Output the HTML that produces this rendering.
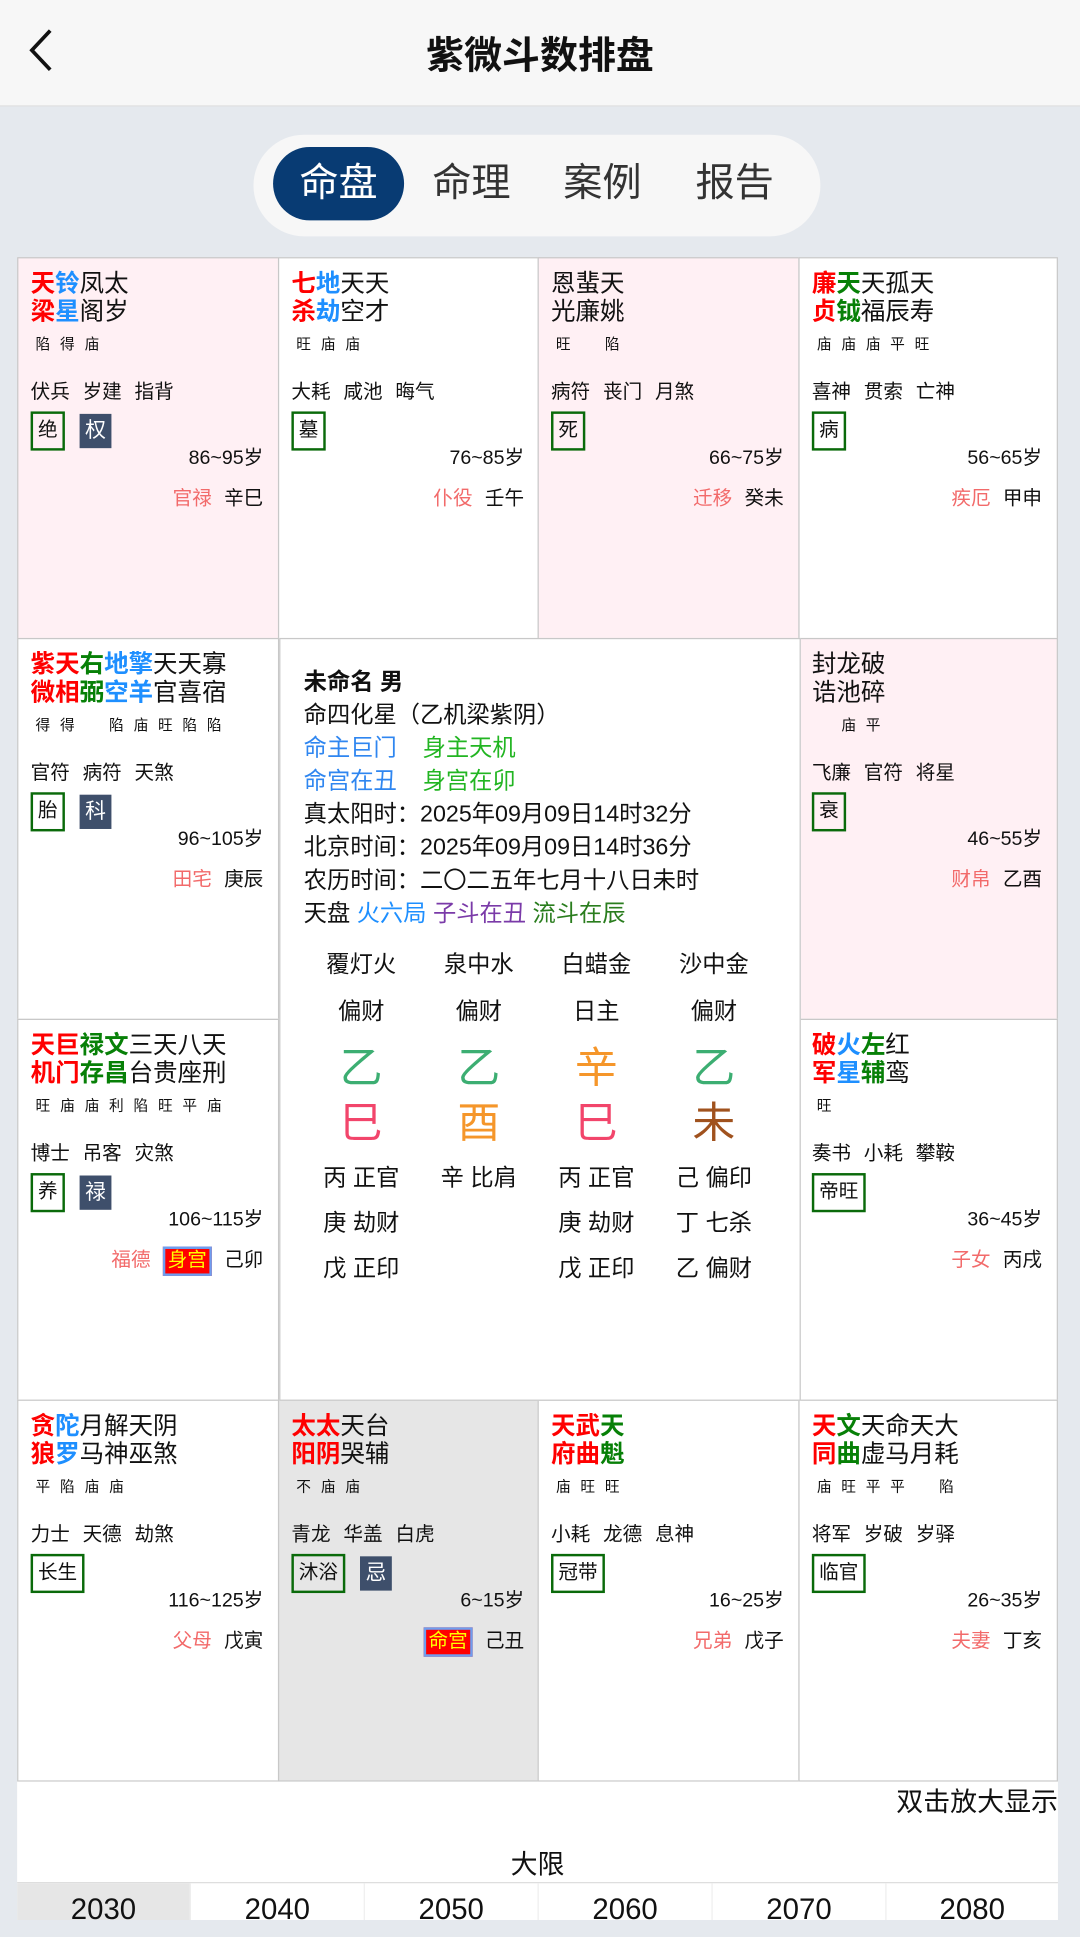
<!DOCTYPE html>
<html><head><meta charset="utf-8">
<style>
*{margin:0;padding:0;box-sizing:border-box}
html,body{width:1080px;height:1920px;overflow:hidden;background:#e5e9ee}
body{font-family:"Liberation Sans","Noto Sans CJK SC",sans-serif;color:#111}
#w{position:absolute;left:0;top:0;width:882px;height:1568px;transform:scale(1.22449);transform-origin:0 0;background:#e5e9ee}
.hdr{position:absolute;left:0;top:0;width:882px;height:87px;background:#f7f7f7;border-bottom:1px solid #e0e0e0}
.ttl{position:absolute;left:0;width:882px;top:20px;text-align:center;font-size:31px;font-weight:bold}
.tabs{position:absolute;left:207px;top:110px;width:463px;height:83px;background:#f7f7f7;border-radius:42px}
.tab{position:absolute;top:10px;height:60px;line-height:58px;font-size:32px;color:#333;text-align:center}
.tab.on{background:#083b73;color:#fff;border-radius:30px}
.c{position:absolute;width:214px;height:312px;background:#fff;border:1px solid #c8c8c8}
.pk{background:#fff0f4}.gy{background:#e6e6e6}
.st{position:absolute;left:10px;top:10px;font-size:20px;line-height:23px;white-space:nowrap}
.b{font-weight:bold}.r{color:#f00}.bl{color:#1e8fff}.g{color:#078007}
.br{position:absolute;left:10px;top:62px;font-size:12px;line-height:16px;white-space:nowrap}
.br span{display:inline-block;width:20px;text-align:center}
.gd{position:absolute;left:10px;top:99px;font-size:16px;line-height:22px;word-spacing:6px;white-space:nowrap}
.bx{position:absolute;top:125px;height:32px;border:2px solid #0a6a0a;font-size:16px;line-height:28px;padding:0 4px}
.dk{position:absolute;top:127px;width:26px;height:28px;background:#3e4f6b;color:#fff;font-size:17px;line-height:28px;text-align:center}
.ag{position:absolute;right:12px;top:153px;font-size:16px;line-height:22px}
.pl{position:absolute;right:12px;top:185px;font-size:16px;line-height:24px;white-space:nowrap}
.pl .p{color:#f26a6a;margin-right:10px}
.sg{display:inline-block;background:#f00;color:#ff0;border:2px solid #6e9ef0;padding:0 2px;line-height:20px;margin-right:10px}
.ctr{position:absolute;left:228px;top:521px;width:426px;height:623px;background:#fff;border:1px solid #c8c8c8}
.ln{position:absolute;left:19px;font-size:19px;line-height:27px;white-space:nowrap}
.col{position:absolute;width:100px;text-align:center;white-space:nowrap}
</style></head><body><div id="w">
<div class="hdr">
<svg style="position:absolute;left:20px;top:22px" width="26" height="38" viewBox="0 0 26 38"><path d="M21 3 L6 19 L21 35" fill="none" stroke="#111" stroke-width="3"/></svg>
<div class="ttl">紫微斗数排盘</div></div>
<div class="tabs">
<div class="tab on" style="left:16px;width:107px">命盘</div>
<div class="tab" style="left:128px;width:100px">命理</div>
<div class="tab" style="left:235px;width:100px">案例</div>
<div class="tab" style="left:343px;width:100px">报告</div>
</div>

<div class="c pk" style="left:14px;top:210px">
<div class="st"><span class="b r">天</span><span class="b bl">铃</span>凤太<br><span class="b r">梁</span><span class="b bl">星</span>阁岁</div>
<div class="br"><span>陷</span><span>得</span><span>庙</span></div>
<div class="gd">伏兵 岁建 指背</div>
<div class="bx" style="left:10px">绝</div><div class="dk" style="left:50px">权</div>
<div class="ag">86~95岁</div><div class="pl"><span class="p">官禄</span>辛巳</div></div>
<div class="c" style="left:227px;top:210px">
<div class="st"><span class="b r">七</span><span class="b bl">地</span>天天<br><span class="b r">杀</span><span class="b bl">劫</span>空才</div>
<div class="br"><span>旺</span><span>庙</span><span>庙</span></div>
<div class="gd">大耗 咸池 晦气</div>
<div class="bx" style="left:10px">墓</div>
<div class="ag">76~85岁</div><div class="pl"><span class="p">仆役</span>壬午</div></div>
<div class="c pk" style="left:439px;top:210px">
<div class="st">恩蜚天<br>光廉姚</div>
<div class="br"><span>旺</span><span></span><span>陷</span></div>
<div class="gd">病符 丧门 月煞</div>
<div class="bx" style="left:10px">死</div>
<div class="ag">66~75岁</div><div class="pl"><span class="p">迁移</span>癸未</div></div>
<div class="c" style="left:652px;top:210px;width:212px">
<div class="st"><span class="b r">廉</span><span class="b g">天</span>天孤天<br><span class="b r">贞</span><span class="b g">钺</span>福辰寿</div>
<div class="br"><span>庙</span><span>庙</span><span>庙</span><span>平</span><span>旺</span></div>
<div class="gd">喜神 贯索 亡神</div>
<div class="bx" style="left:10px">病</div>
<div class="ag">56~65岁</div><div class="pl"><span class="p">疾厄</span>甲申</div></div>

<div class="c" style="left:14px;top:521px">
<div class="st"><span class="b r">紫天</span><span class="b g">右</span><span class="b bl">地擎</span>天天寡<br><span class="b r">微相</span><span class="b g">弼</span><span class="b bl">空羊</span>官喜宿</div>
<div class="br"><span>得</span><span>得</span><span></span><span>陷</span><span>庙</span><span>旺</span><span>陷</span><span>陷</span></div>
<div class="gd">官符 病符 天煞</div>
<div class="bx" style="left:10px">胎</div><div class="dk" style="left:50px">科</div>
<div class="ag">96~105岁</div><div class="pl"><span class="p">田宅</span>庚辰</div></div>
<div class="c pk" style="left:652px;top:521px;width:212px">
<div class="st">封龙破<br>诰池碎</div>
<div class="br"><span></span><span>庙</span><span>平</span></div>
<div class="gd">飞廉 官符 将星</div>
<div class="bx" style="left:10px">衰</div>
<div class="ag">46~55岁</div><div class="pl"><span class="p">财帛</span>乙酉</div></div>

<div class="c" style="left:14px;top:832px">
<div class="st"><span class="b r">天巨</span><span class="b g">禄文</span>三天八天<br><span class="b r">机门</span><span class="b g">存昌</span>台贵座刑</div>
<div class="br"><span>旺</span><span>庙</span><span>庙</span><span>利</span><span>陷</span><span>旺</span><span>平</span><span>庙</span></div>
<div class="gd">博士 吊客 灾煞</div>
<div class="bx" style="left:10px">养</div><div class="dk" style="left:50px">禄</div>
<div class="ag">106~115岁</div><div class="pl"><span class="p">福德</span><span class="sg">身宫</span>己卯</div></div>
<div class="c" style="left:652px;top:832px;width:212px">
<div class="st"><span class="b r">破</span><span class="b bl">火</span><span class="b g">左</span>红<br><span class="b r">军</span><span class="b bl">星</span><span class="b g">辅</span>鸾</div>
<div class="br"><span>旺</span></div>
<div class="gd">奏书 小耗 攀鞍</div>
<div class="bx" style="left:10px">帝旺</div>
<div class="ag">36~45岁</div><div class="pl"><span class="p">子女</span>丙戌</div></div>

<div class="c" style="left:14px;top:1143px">
<div class="st"><span class="b r">贪</span><span class="b bl">陀</span>月解天阴<br><span class="b r">狼</span><span class="b bl">罗</span>马神巫煞</div>
<div class="br"><span>平</span><span>陷</span><span>庙</span><span>庙</span></div>
<div class="gd">力士 天德 劫煞</div>
<div class="bx" style="left:10px">长生</div>
<div class="ag">116~125岁</div><div class="pl"><span class="p">父母</span>戊寅</div></div>
<div class="c gy" style="left:227px;top:1143px">
<div class="st"><span class="b r">太太</span>天台<br><span class="b r">阳阴</span>哭辅</div>
<div class="br"><span>不</span><span>庙</span><span>庙</span></div>
<div class="gd">青龙 华盖 白虎</div>
<div class="bx" style="left:10px">沐浴</div><div class="dk" style="left:66px">忌</div>
<div class="ag">6~15岁</div><div class="pl"><span class="sg">命宫</span>己丑</div></div>
<div class="c" style="left:439px;top:1143px">
<div class="st"><span class="b r">天武</span><span class="b g">天</span><br><span class="b r">府曲</span><span class="b g">魁</span></div>
<div class="br"><span>庙</span><span>旺</span><span>旺</span></div>
<div class="gd">小耗 龙德 息神</div>
<div class="bx" style="left:10px">冠带</div>
<div class="ag">16~25岁</div><div class="pl"><span class="p">兄弟</span>戊子</div></div>
<div class="c" style="left:652px;top:1143px;width:212px">
<div class="st"><span class="b r">天</span><span class="b g">文</span>天命天大<br><span class="b r">同</span><span class="b g">曲</span>虚马月耗</div>
<div class="br"><span>庙</span><span>旺</span><span>平</span><span>平</span><span></span><span>陷</span></div>
<div class="gd">将军 岁破 岁驿</div>
<div class="bx" style="left:10px">临官</div>
<div class="ag">26~35岁</div><div class="pl"><span class="p">夫妻</span>丁亥</div></div>

<div class="ctr">
<div class="ln b" style="top:22px">未命名 男</div>
<div class="ln" style="top:49px">命四化星（乙机梁紫阴）</div>
<div class="ln" style="top:76px"><span style="color:#2f86f0">命主巨门</span>&nbsp;&nbsp;&nbsp;&nbsp;<span style="color:#22b522">身主天机</span></div>
<div class="ln" style="top:103px"><span style="color:#2f86f0">命宫在丑</span>&nbsp;&nbsp;&nbsp;&nbsp;<span style="color:#22b522">身宫在卯</span></div>
<div class="ln" style="top:130px">真太阳时：2025年09月09日14时32分</div>
<div class="ln" style="top:157px">北京时间：2025年09月09日14时36分</div>
<div class="ln" style="top:184px">农历时间：二〇二五年七月十八日未时</div>
<div class="ln" style="top:211px">天盘 <span style="color:#1e8fff">火六局</span> <span style="color:#7a3aa8">子斗在丑</span> <span style="color:#2a7d1e">流斗在辰</span></div>
<div class="col" style="left:16px;top:254px;font-size:19px;line-height:26px">覆灯火<br><div style="height:12px"></div>偏财</div>
<div class="col" style="left:112px;top:254px;font-size:19px;line-height:26px">泉中水<br><div style="height:12px"></div>偏财</div>
<div class="col" style="left:208px;top:254px;font-size:19px;line-height:26px">白蜡金<br><div style="height:12px"></div>日主</div>
<div class="col" style="left:304px;top:254px;font-size:19px;line-height:26px">沙中金<br><div style="height:12px"></div>偏财</div>
<div class="col" style="left:16px;top:328px;font-size:35px;line-height:45px"><span style="color:#3cae72">乙</span><br><span style="color:#f2456b">巳</span></div>
<div class="col" style="left:112px;top:328px;font-size:35px;line-height:45px"><span style="color:#3cae72">乙</span><br><span style="color:#f5962a">酉</span></div>
<div class="col" style="left:208px;top:328px;font-size:35px;line-height:45px"><span style="color:#f5962a">辛</span><br><span style="color:#f2456b">巳</span></div>
<div class="col" style="left:304px;top:328px;font-size:35px;line-height:45px"><span style="color:#3cae72">乙</span><br><span style="color:#a0521e">未</span></div>
<div class="col" style="left:16px;top:422px;font-size:19px;line-height:37px">丙 正官<br>庚 劫财<br>戊 正印</div>
<div class="col" style="left:112px;top:422px;font-size:19px;line-height:37px">辛 比肩</div>
<div class="col" style="left:208px;top:422px;font-size:19px;line-height:37px">丙 正官<br>庚 劫财<br>戊 正印</div>
<div class="col" style="left:304px;top:422px;font-size:19px;line-height:37px">己 偏印<br>丁 七杀<br>乙 偏财</div>
</div>

<div style="position:absolute;left:14px;top:1455px;width:850px;height:113px;background:#fff"></div>
<div style="position:absolute;right:18px;top:1458px;font-size:22px;line-height:28px">双击放大显示</div>
<div style="position:absolute;left:0;width:878px;text-align:center;top:1509px;font-size:22px;line-height:28px">大限</div>
<div style="position:absolute;left:14px;top:1537px;width:850px;height:1px;background:#ddd"></div>
<div style="position:absolute;left:14px;top:1538px;width:850px;height:30px;font-size:24px;line-height:44px">
<div style="position:absolute;left:0;width:141px;height:30px;background:#e6e6e6;text-align:center">2030</div>
<div style="position:absolute;left:141px;width:142px;text-align:center;border-left:1px solid #eee;height:30px">2040</div>
<div style="position:absolute;left:283px;width:142px;text-align:center;border-left:1px solid #eee;height:30px">2050</div>
<div style="position:absolute;left:425px;width:142px;text-align:center;border-left:1px solid #eee;height:30px">2060</div>
<div style="position:absolute;left:567px;width:142px;text-align:center;border-left:1px solid #eee;height:30px">2070</div>
<div style="position:absolute;left:709px;width:141px;text-align:center;border-left:1px solid #eee;height:30px">2080</div>
</div>
</div></body></html>
